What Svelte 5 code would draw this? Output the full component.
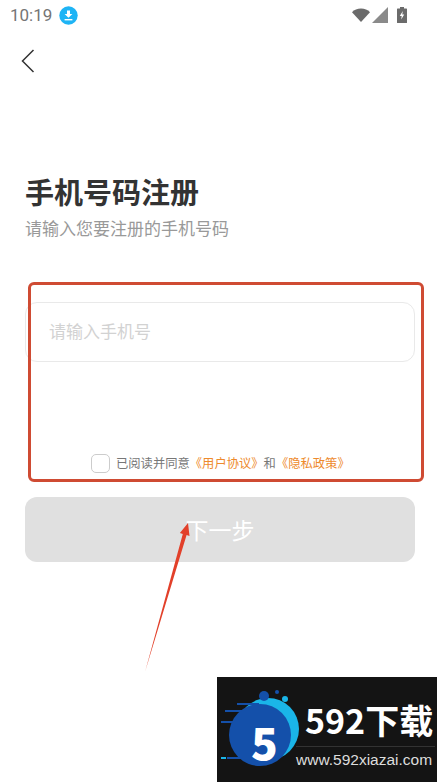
<script>
  let phone = $state('');
  let agreed = $state(false);
</script>

<div class="page">
  <div class="status">
    <div class="status-left">
      <span class="time">10:19</span>
      <svg class="dl" width="19" height="19" viewBox="0 0 19 19">
        <circle cx="9.5" cy="9.5" r="9.2" fill="#1eb4f5" />
        <path d="M8 4.5h3v3.6h2.4L9.5 11.8 5.6 8.1H8z" fill="#fff" />
        <rect x="5.6" y="13" width="7.8" height="1.4" fill="#fff" />
      </svg>
    </div>
    <div class="status-right">
      <svg width="18" height="14" viewBox="0 0 18 14"><path d="M0 4.2C2.2 2 5.4.6 9 .6s6.800 1.400 9 3.600L9 14z" fill="#6b6b6b" /></svg>
      <svg width="16" height="16" viewBox="0 0 16 16"><path d="M0 16L16 0v16z" fill="#8a8a8a" /></svg>
      <svg class="batt" width="10" height="16" viewBox="0 0 10 16">
        <path d="M3 0h4v1.500h2.400q.6 0 .6.600V15.400q0 .6-.6.600H.6q-.6 0-.6-.6V2.100q0-.6.600-.6H3z" fill="#6b6b6b" />
        <path d="M5.800 4L2.800 9h1.900l-.5 3.500L7.200 7.500H5.300z" fill="#fff" />
      </svg>
    </div>
  </div>

  <button class="back" aria-label="返回">
    <svg width="14" height="24" viewBox="0 0 14 24"><path d="M12.500 1L1.500 12l11 11" fill="none" stroke="#333" stroke-width="1.500" /></svg>
  </button>

  <h1>手机号码注册</h1>
  <p class="sub">请输入您要注册的手机号码</p>

  <input class="phone" type="text" placeholder="请输入手机号" bind:value={phone} />

  <label class="agree">
    <input type="checkbox" bind:checked={agreed} />
    <span class="box"></span>
    <span>已阅读并同意<em>《用户协议》</em>和<em>《隐私政策》</em></span>
  </label>

  <button class="next">下一步</button>

  <!-- annotations pasted over the screenshot -->
  <div class="mark"></div>
  <svg class="arrow" width="70" height="170" viewBox="0 0 70 170">
    <path d="M15 158L52.800 20 49.900 19 58 9 59.500 22 56.600 21z" fill="#e2402a" />
  </svg>

  <div class="promo">
    <svg class="promo-logo" width="84" height="92" viewBox="0 0 84 92">
      <circle cx="47" cy="43" r="31" fill="#1ab5e8" />
      <circle cx="39" cy="49" r="31" fill="#1450aa" />
      <circle cx="43" cy="10" r="5" fill="#1450aa" />
      <circle cx="56" cy="6" r="2" fill="#1450aa" />
      <circle cx="64" cy="13" r="3" fill="#1ab5e8" />
      <path d="M16 17h22v2H16zM4 24h26v2H4zM0 35h26v2H0zM14 42h12v2H14zM6 71h30v2H6z" fill="#1450aa" />
      <path d="M0 71h5v2H0z" fill="#1ab5e8" />
    </svg>
    <span class="promo-five">5</span>
    <div class="promo-text">
      <span class="promo-name">592下载</span>
      <span class="promo-url">www.592xiazai.com</span>
    </div>
  </div>
</div>

<style>
  :global(body) {
    background: #fff;
  }

  .page {
    position: relative;
    width: 440px;
    height: 782px;
    overflow: hidden;
    background: #fff;
    font-family: "Noto Sans CJK SC", "Noto Sans", sans-serif;
  }

  .status {
    display: flex;
    justify-content: space-between;
    align-items: center;
    height: 30px;
    padding: 0 33px 0 10px;
  }

  .status-left,
  .status-right {
    display: flex;
    align-items: center;
  }

  .status-left {
    gap: 7px;
  }

  .status-right {
    gap: 2px;
  }

  .batt {
    margin-left: 7px;
  }

  .time {
    font: 17px "Roboto", sans-serif;
    color: #757575;
  }

  .back {
    display: block;
    margin: 19px 0 0 21px;
    padding: 0;
    height: 24px;
    background: none;
    border: none;
  }

  h1 {
    margin: 98px 0 0 25px;
    font-size: 29px;
    line-height: 40px;
    font-weight: 700;
    color: #333;
  }

  .sub {
    margin: 4px 0 0 25px;
    font-size: 17px;
    line-height: 26px;
    color: #999;
  }

  .phone {
    display: block;
    box-sizing: border-box;
    width: 390px;
    height: 60px;
    margin: 61px 0 0 25px;
    padding: 0 23px 3px;
    border: 1px solid #e9e9e9;
    border-radius: 12px;
    outline: none;
    font: 17px "Noto Sans CJK SC", sans-serif;
  }

  .phone::placeholder {
    color: #d2d2d2;
  }

  .agree {
    display: flex;
    align-items: center;
    gap: 6px;
    margin: 91px 0 0 0;
    padding-left: 91px;
    height: 20px;
    font-size: 12.3px;
    color: #777;
  }

  .agree input {
    display: none;
  }

  .box {
    box-sizing: border-box;
    width: 19px;
    height: 19px;
    border: 1px solid #ccc;
    border-radius: 5px;
  }

  .agree em {
    font-style: normal;
    color: #ee8a2c;
  }

  .next {
    display: block;
    width: 390px;
    height: 65px;
    margin: 24px 0 0 25px;
    padding: 0 0 2px;
    border: none;
    border-radius: 12px;
    background: #e0e0e0;
    color: #fff;
    font: 23px "Noto Sans CJK SC", sans-serif;
  }

  .mark {
    position: absolute;
    left: 28px;
    top: 282px;
    width: 396px;
    height: 200px;
    box-sizing: border-box;
    border: 3px solid #cf4b33;
    border-radius: 6px;
    pointer-events: none;
  }

  .arrow {
    position: absolute;
    left: 130px;
    top: 514px;
    pointer-events: none;
  }

  .promo {
    position: absolute;
    left: 217px;
    top: 677px;
    width: 220px;
    height: 105px;
    background: #141414;
  }

  .promo-logo {
    position: absolute;
    left: 4px;
    top: 9px;
  }

  .promo-five {
    position: absolute;
    left: 34px;
    top: 34px;
    font: 900 44px/60px "Noto Sans CJK SC", sans-serif;
    color: #fff;
  }

  .promo-text {
    position: absolute;
    left: 79px;
    top: 21px;
    display: flex;
    flex-direction: column;
    width: 139px;
  }

  .promo-name {
    box-sizing: border-box;
    height: 49px;
    padding-left: 9px;
    font: 700 34px/44px "Noto Sans CJK SC", sans-serif;
    color: #fff;
    border-bottom: 1px solid #333;
    white-space: nowrap;
  }

  .promo-url {
    font: 15.500px/25px "Liberation Sans", sans-serif;
    color: #ddd;
    white-space: nowrap;
  }
</style>
